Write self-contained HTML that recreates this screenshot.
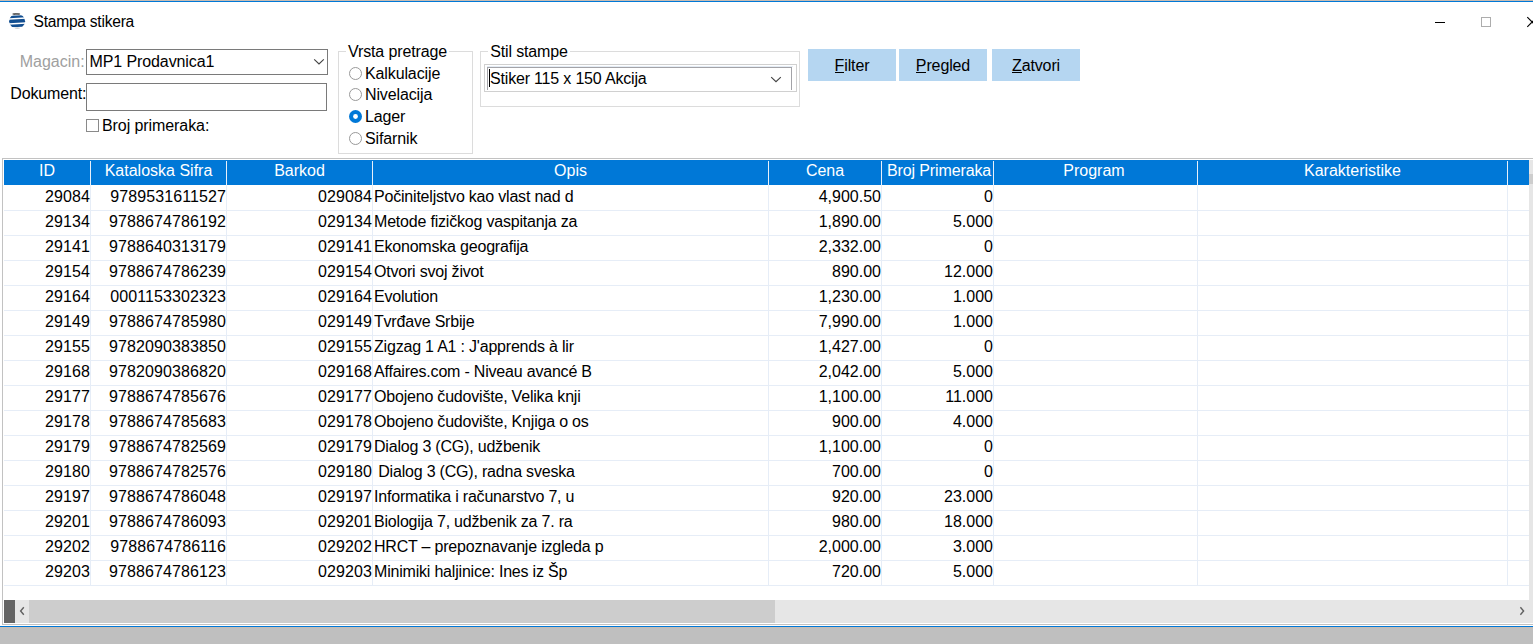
<!DOCTYPE html><html><head><meta charset="utf-8"><style>
*{margin:0;padding:0;box-sizing:border-box}
html,body{width:1533px;height:644px;overflow:hidden;background:#fff;position:relative;font-family:"Liberation Sans",sans-serif;}
.t{position:absolute;white-space:pre;line-height:20px;font-size:16px;}
.r{position:absolute;}
</style></head><body>
<div class="r" style="left:0;top:0;width:1533px;height:1px;background:#c8bcb2"></div>
<div class="r" style="left:0;top:1px;width:1533px;height:1px;background:#0078d7"></div>
<svg class="r" style="left:0;top:0" width="40" height="40" viewBox="0 0 40 40">
<defs><clipPath id="c"><ellipse cx="17.1" cy="21.2" rx="8.0" ry="7.2"/></clipPath></defs>
<ellipse cx="16.3" cy="14.1" rx="3.9" ry="1.0" fill="#5a5a5a"/><ellipse cx="16.6" cy="14.2" rx="2" ry="0.35" fill="#9a9a9a"/>
<g clip-path="url(#c)" fill="#134f91">
<path d="M8 15.9 Q17 15.6 26 14.9 L26 17.3 Q17 17.8 8 18.4Z"/>
<path d="M8 19.9 Q17 19.5 26 18.8 L26 22.2 Q17 22.7 8 23.3Z"/>
<path d="M8 24.8 Q17 24.3 26 23.7 L26 26.5 Q17 27.0 8 27.3Z"/>
</g>
<ellipse cx="17.3" cy="28.1" rx="2.8" ry="0.6" fill="#c4c4c4"/>
</svg>
<div class="t" style="left:33.5px;top:11.7px;color:#000;font-size:15.6px;letter-spacing:-0.25px;">Stampa stikera</div>
<div class="r" style="left:1435px;top:22px;width:10px;height:1px;background:#000"></div>
<div class="r" style="left:1481px;top:17px;width:10px;height:10px;border:1px solid #adadad"></div>
<svg class="r" style="left:1520px;top:10px" width="20" height="24"><path d="M7.3 7.2 L16.9 16.8 M7.3 16.8 L16.9 7.2" stroke="#000" stroke-width="1.1"/></svg>
<div class="t" style="left:0px;top:51.5px;color:#a0a0a0;font-size:16px;width:84.6px;text-align:right;">Magacin:</div>
<div class="r" style="left:86px;top:49px;width:242px;height:26px;border:1px solid #7a7a7a"></div>
<div class="t" style="left:89.5px;top:51.5px;color:#000;font-size:16px;letter-spacing:-0.1px;">MP1 Prodavnica1</div>
<svg class="r" style="left:313px;top:58px" width="12" height="8"><path d="M1.2 1.3 L6 5.9 L10.8 1.3" fill="none" stroke="#444" stroke-width="1.15"/></svg>
<div class="t" style="left:0px;top:83.5px;color:#000;font-size:16px;width:86.3px;text-align:right;letter-spacing:-0.15px;">Dokument:</div>
<div class="r" style="left:86px;top:83px;width:241px;height:28px;border:1px solid #7a7a7a"></div>
<div class="r" style="left:86px;top:119px;width:13px;height:13px;border:1px solid #8a8a8a"></div>
<div class="t" style="left:102px;top:115.5px;color:#000;font-size:16px;letter-spacing:-0.08px;">Broj primeraka:</div>
<div class="r" style="left:338px;top:51px;width:135px;height:103px;border:1px solid #dcdcdc"></div>
<div class="r" style="left:346px;top:44px;width:103px;height:12px;background:#fff"></div>
<div class="t" style="left:348px;top:41.5px;color:#000;font-size:16px;letter-spacing:-0.12px;">Vrsta pretrage</div>
<svg class="r" style="left:348px;top:66.0px" width="15" height="15"><circle cx="7.5" cy="7.5" r="6" fill="#fff" stroke="#999" stroke-width="1"/></svg>
<div class="t" style="left:365px;top:63.599999999999994px;color:#000;font-size:16px;letter-spacing:-0.12px;">Kalkulacije</div>
<svg class="r" style="left:348px;top:86.8px" width="15" height="15"><circle cx="7.5" cy="7.5" r="6" fill="#fff" stroke="#999" stroke-width="1"/></svg>
<div class="t" style="left:365px;top:84.7px;color:#000;font-size:16px;letter-spacing:-0.12px;">Nivelacija</div>
<svg class="r" style="left:348px;top:109.1px" width="15" height="15"><circle cx="7.5" cy="7.5" r="6.5" fill="#0078d7"/><circle cx="7.5" cy="7.5" r="2.4" fill="#fff"/></svg>
<div class="t" style="left:365px;top:106.6px;color:#000;font-size:16px;letter-spacing:-0.12px;">Lager</div>
<svg class="r" style="left:348px;top:130.8px" width="15" height="15"><circle cx="7.5" cy="7.5" r="6" fill="#fff" stroke="#999" stroke-width="1"/></svg>
<div class="t" style="left:365px;top:128.7px;color:#000;font-size:16px;letter-spacing:-0.12px;">Sifarnik</div>
<div class="r" style="left:480px;top:51px;width:320px;height:56px;border:1px solid #dcdcdc"></div>
<div class="r" style="left:488px;top:44px;width:82px;height:12px;background:#fff"></div>
<div class="t" style="left:490.3px;top:41.5px;color:#000;font-size:16px;letter-spacing:-0.15px;">Stil stampe</div>
<div class="r" style="left:484px;top:64px;width:313px;height:28px;border:1px solid #d0d0d0"></div>
<div class="r" style="left:487px;top:67px;width:305px;height:23px;border-left:1px solid #a3a3a8;border-top:1px solid #a3a3a8;border-right:1px solid #a3a3a8"></div>
<div class="r" style="left:487px;top:66px;width:306px;height:1px;background:#e4ecf5"></div>
<div class="r" style="left:489px;top:69px;width:1px;height:18px;background:#000"></div>
<div class="t" style="left:490px;top:68.8px;color:#000;font-size:16px;letter-spacing:-0.18px;">Stiker 115 x 150 Akcija</div>
<svg class="r" style="left:770px;top:76px" width="12" height="8"><path d="M1.2 1.2 L6 5.7 L10.8 1.2" fill="none" stroke="#444" stroke-width="1.15"/></svg>
<div class="r" style="left:808px;top:49px;width:88px;height:32px;background:#b5d6f1"></div>
<div class="t" style="left:808px;top:55.5px;width:88px;text-align:center;letter-spacing:-0.12px"><span style="position:relative">F<span style="position:absolute;left:0;right:0;top:15.5px;height:1px;background:#000"></span></span>ilter</div>
<div class="r" style="left:899px;top:49px;width:88px;height:32px;background:#b5d6f1"></div>
<div class="t" style="left:899px;top:55.5px;width:88px;text-align:center;letter-spacing:-0.12px"><span style="position:relative">P<span style="position:absolute;left:0;right:0;top:15.5px;height:1px;background:#000"></span></span>regled</div>
<div class="r" style="left:992px;top:49px;width:88px;height:32px;background:#b5d6f1"></div>
<div class="t" style="left:992px;top:55.5px;width:88px;text-align:center;letter-spacing:-0.12px"><span style="position:relative">Z<span style="position:absolute;left:0;right:0;top:15.5px;height:1px;background:#000"></span></span>atvori</div>
<div class="r" style="left:2px;top:158px;width:1531px;height:1px;background:#c2c2c2"></div>
<div class="r" style="left:2px;top:158px;width:1px;height:467px;background:#c2c2c2"></div>
<div class="r" style="left:2px;top:624px;width:1531px;height:1px;background:#c2c2c2"></div>
<div class="r" style="left:4px;top:160px;width:1525px;height:25px;background:#0078d7"></div>
<div class="r" style="left:90px;top:161px;width:1px;height:24px;background:#e8f0fa"></div>
<div class="r" style="left:90px;top:185px;width:1px;height:401px;background:#e6edf7"></div>
<div class="r" style="left:226px;top:161px;width:1px;height:24px;background:#e8f0fa"></div>
<div class="r" style="left:226px;top:185px;width:1px;height:401px;background:#e6edf7"></div>
<div class="r" style="left:372px;top:161px;width:1px;height:24px;background:#e8f0fa"></div>
<div class="r" style="left:372px;top:185px;width:1px;height:401px;background:#e6edf7"></div>
<div class="r" style="left:768px;top:161px;width:1px;height:24px;background:#e8f0fa"></div>
<div class="r" style="left:768px;top:185px;width:1px;height:401px;background:#e6edf7"></div>
<div class="r" style="left:881px;top:161px;width:1px;height:24px;background:#e8f0fa"></div>
<div class="r" style="left:881px;top:185px;width:1px;height:401px;background:#e6edf7"></div>
<div class="r" style="left:993px;top:161px;width:1px;height:24px;background:#e8f0fa"></div>
<div class="r" style="left:993px;top:185px;width:1px;height:401px;background:#e6edf7"></div>
<div class="r" style="left:1197px;top:161px;width:1px;height:24px;background:#e8f0fa"></div>
<div class="r" style="left:1197px;top:185px;width:1px;height:401px;background:#e6edf7"></div>
<div class="r" style="left:1507px;top:161px;width:1px;height:24px;background:#e8f0fa"></div>
<div class="r" style="left:1507px;top:185px;width:1px;height:401px;background:#e6edf7"></div>
<div class="r" style="left:4px;top:210px;width:1525px;height:1px;background:#e6edf7"></div>
<div class="r" style="left:4px;top:235px;width:1525px;height:1px;background:#e6edf7"></div>
<div class="r" style="left:4px;top:260px;width:1525px;height:1px;background:#e6edf7"></div>
<div class="r" style="left:4px;top:285px;width:1525px;height:1px;background:#e6edf7"></div>
<div class="r" style="left:4px;top:310px;width:1525px;height:1px;background:#e6edf7"></div>
<div class="r" style="left:4px;top:335px;width:1525px;height:1px;background:#e6edf7"></div>
<div class="r" style="left:4px;top:360px;width:1525px;height:1px;background:#e6edf7"></div>
<div class="r" style="left:4px;top:385px;width:1525px;height:1px;background:#e6edf7"></div>
<div class="r" style="left:4px;top:410px;width:1525px;height:1px;background:#e6edf7"></div>
<div class="r" style="left:4px;top:435px;width:1525px;height:1px;background:#e6edf7"></div>
<div class="r" style="left:4px;top:460px;width:1525px;height:1px;background:#e6edf7"></div>
<div class="r" style="left:4px;top:485px;width:1525px;height:1px;background:#e6edf7"></div>
<div class="r" style="left:4px;top:510px;width:1525px;height:1px;background:#e6edf7"></div>
<div class="r" style="left:4px;top:535px;width:1525px;height:1px;background:#e6edf7"></div>
<div class="r" style="left:4px;top:560px;width:1525px;height:1px;background:#e6edf7"></div>
<div class="r" style="left:4px;top:585px;width:1525px;height:1px;background:#e6edf7"></div>
<div class="t" style="left:4px;top:160.5px;width:86px;text-align:center;color:#fff;">ID</div>
<div class="t" style="left:91px;top:160.5px;width:135px;text-align:center;color:#fff;">Kataloska Sifra</div>
<div class="t" style="left:227px;top:160.5px;width:145px;text-align:center;color:#fff;">Barkod</div>
<div class="t" style="left:373px;top:160.5px;width:395px;text-align:center;color:#fff;">Opis</div>
<div class="t" style="left:769px;top:160.5px;width:112px;text-align:center;color:#fff;">Cena</div>
<div class="t" style="left:883.5px;top:160.5px;width:111px;text-align:center;color:#fff;letter-spacing:-0.12px;">Broj Primeraka</div>
<div class="t" style="left:992.5px;top:160.5px;width:203px;text-align:center;color:#fff;">Program</div>
<div class="t" style="left:1198px;top:160.5px;width:309px;text-align:center;color:#fff;">Karakteristike</div>
<div class="t" style="left:4px;top:186.5px;width:86px;text-align:right;padding-right:0px;letter-spacing:0.1px;">29084</div>
<div class="t" style="left:91px;top:186.5px;width:135px;text-align:right;padding-right:0px;letter-spacing:0.1px;">9789531611527</div>
<div class="t" style="left:227px;top:186.5px;width:145px;text-align:right;padding-right:0px;letter-spacing:0.1px;">029084</div>
<div class="t" style="left:374px;top:186.5px;letter-spacing:-0.2px">Počiniteljstvo kao vlast nad d</div>
<div class="t" style="left:769px;top:186.5px;width:112px;text-align:right;padding-right:0px;">4,900.50</div>
<div class="t" style="left:882px;top:186.5px;width:111px;text-align:right;padding-right:0px;">0</div>
<div class="t" style="left:4px;top:211.5px;width:86px;text-align:right;padding-right:0px;letter-spacing:0.1px;">29134</div>
<div class="t" style="left:91px;top:211.5px;width:135px;text-align:right;padding-right:0px;letter-spacing:0.1px;">9788674786192</div>
<div class="t" style="left:227px;top:211.5px;width:145px;text-align:right;padding-right:0px;letter-spacing:0.1px;">029134</div>
<div class="t" style="left:374px;top:211.5px;letter-spacing:-0.2px">Metode fizičkog vaspitanja za</div>
<div class="t" style="left:769px;top:211.5px;width:112px;text-align:right;padding-right:0px;">1,890.00</div>
<div class="t" style="left:882px;top:211.5px;width:111px;text-align:right;padding-right:0px;">5.000</div>
<div class="t" style="left:4px;top:236.5px;width:86px;text-align:right;padding-right:0px;letter-spacing:0.1px;">29141</div>
<div class="t" style="left:91px;top:236.5px;width:135px;text-align:right;padding-right:0px;letter-spacing:0.1px;">9788640313179</div>
<div class="t" style="left:227px;top:236.5px;width:145px;text-align:right;padding-right:0px;letter-spacing:0.1px;">029141</div>
<div class="t" style="left:374px;top:236.5px;letter-spacing:-0.2px">Ekonomska geografija</div>
<div class="t" style="left:769px;top:236.5px;width:112px;text-align:right;padding-right:0px;">2,332.00</div>
<div class="t" style="left:882px;top:236.5px;width:111px;text-align:right;padding-right:0px;">0</div>
<div class="t" style="left:4px;top:261.5px;width:86px;text-align:right;padding-right:0px;letter-spacing:0.1px;">29154</div>
<div class="t" style="left:91px;top:261.5px;width:135px;text-align:right;padding-right:0px;letter-spacing:0.1px;">9788674786239</div>
<div class="t" style="left:227px;top:261.5px;width:145px;text-align:right;padding-right:0px;letter-spacing:0.1px;">029154</div>
<div class="t" style="left:374px;top:261.5px;letter-spacing:-0.2px">Otvori svoj život</div>
<div class="t" style="left:769px;top:261.5px;width:112px;text-align:right;padding-right:0px;">890.00</div>
<div class="t" style="left:882px;top:261.5px;width:111px;text-align:right;padding-right:0px;">12.000</div>
<div class="t" style="left:4px;top:286.5px;width:86px;text-align:right;padding-right:0px;letter-spacing:0.1px;">29164</div>
<div class="t" style="left:91px;top:286.5px;width:135px;text-align:right;padding-right:0px;letter-spacing:0.1px;">0001153302323</div>
<div class="t" style="left:227px;top:286.5px;width:145px;text-align:right;padding-right:0px;letter-spacing:0.1px;">029164</div>
<div class="t" style="left:374px;top:286.5px;letter-spacing:-0.2px">Evolution</div>
<div class="t" style="left:769px;top:286.5px;width:112px;text-align:right;padding-right:0px;">1,230.00</div>
<div class="t" style="left:882px;top:286.5px;width:111px;text-align:right;padding-right:0px;">1.000</div>
<div class="t" style="left:4px;top:311.5px;width:86px;text-align:right;padding-right:0px;letter-spacing:0.1px;">29149</div>
<div class="t" style="left:91px;top:311.5px;width:135px;text-align:right;padding-right:0px;letter-spacing:0.1px;">9788674785980</div>
<div class="t" style="left:227px;top:311.5px;width:145px;text-align:right;padding-right:0px;letter-spacing:0.1px;">029149</div>
<div class="t" style="left:374px;top:311.5px;letter-spacing:-0.2px">Tvrđave Srbije</div>
<div class="t" style="left:769px;top:311.5px;width:112px;text-align:right;padding-right:0px;">7,990.00</div>
<div class="t" style="left:882px;top:311.5px;width:111px;text-align:right;padding-right:0px;">1.000</div>
<div class="t" style="left:4px;top:336.5px;width:86px;text-align:right;padding-right:0px;letter-spacing:0.1px;">29155</div>
<div class="t" style="left:91px;top:336.5px;width:135px;text-align:right;padding-right:0px;letter-spacing:0.1px;">9782090383850</div>
<div class="t" style="left:227px;top:336.5px;width:145px;text-align:right;padding-right:0px;letter-spacing:0.1px;">029155</div>
<div class="t" style="left:374px;top:336.5px;letter-spacing:-0.2px">Zigzag 1 A1 : J'apprends à lir</div>
<div class="t" style="left:769px;top:336.5px;width:112px;text-align:right;padding-right:0px;">1,427.00</div>
<div class="t" style="left:882px;top:336.5px;width:111px;text-align:right;padding-right:0px;">0</div>
<div class="t" style="left:4px;top:361.5px;width:86px;text-align:right;padding-right:0px;letter-spacing:0.1px;">29168</div>
<div class="t" style="left:91px;top:361.5px;width:135px;text-align:right;padding-right:0px;letter-spacing:0.1px;">9782090386820</div>
<div class="t" style="left:227px;top:361.5px;width:145px;text-align:right;padding-right:0px;letter-spacing:0.1px;">029168</div>
<div class="t" style="left:374px;top:361.5px;letter-spacing:-0.2px">Affaires.com - Niveau avancé B</div>
<div class="t" style="left:769px;top:361.5px;width:112px;text-align:right;padding-right:0px;">2,042.00</div>
<div class="t" style="left:882px;top:361.5px;width:111px;text-align:right;padding-right:0px;">5.000</div>
<div class="t" style="left:4px;top:386.5px;width:86px;text-align:right;padding-right:0px;letter-spacing:0.1px;">29177</div>
<div class="t" style="left:91px;top:386.5px;width:135px;text-align:right;padding-right:0px;letter-spacing:0.1px;">9788674785676</div>
<div class="t" style="left:227px;top:386.5px;width:145px;text-align:right;padding-right:0px;letter-spacing:0.1px;">029177</div>
<div class="t" style="left:374px;top:386.5px;letter-spacing:-0.2px">Obojeno čudovište, Velika knji</div>
<div class="t" style="left:769px;top:386.5px;width:112px;text-align:right;padding-right:0px;">1,100.00</div>
<div class="t" style="left:882px;top:386.5px;width:111px;text-align:right;padding-right:0px;">11.000</div>
<div class="t" style="left:4px;top:411.5px;width:86px;text-align:right;padding-right:0px;letter-spacing:0.1px;">29178</div>
<div class="t" style="left:91px;top:411.5px;width:135px;text-align:right;padding-right:0px;letter-spacing:0.1px;">9788674785683</div>
<div class="t" style="left:227px;top:411.5px;width:145px;text-align:right;padding-right:0px;letter-spacing:0.1px;">029178</div>
<div class="t" style="left:374px;top:411.5px;letter-spacing:-0.2px">Obojeno čudovište, Knjiga o os</div>
<div class="t" style="left:769px;top:411.5px;width:112px;text-align:right;padding-right:0px;">900.00</div>
<div class="t" style="left:882px;top:411.5px;width:111px;text-align:right;padding-right:0px;">4.000</div>
<div class="t" style="left:4px;top:436.5px;width:86px;text-align:right;padding-right:0px;letter-spacing:0.1px;">29179</div>
<div class="t" style="left:91px;top:436.5px;width:135px;text-align:right;padding-right:0px;letter-spacing:0.1px;">9788674782569</div>
<div class="t" style="left:227px;top:436.5px;width:145px;text-align:right;padding-right:0px;letter-spacing:0.1px;">029179</div>
<div class="t" style="left:374px;top:436.5px;letter-spacing:-0.2px">Dialog 3 (CG), udžbenik</div>
<div class="t" style="left:769px;top:436.5px;width:112px;text-align:right;padding-right:0px;">1,100.00</div>
<div class="t" style="left:882px;top:436.5px;width:111px;text-align:right;padding-right:0px;">0</div>
<div class="t" style="left:4px;top:461.5px;width:86px;text-align:right;padding-right:0px;letter-spacing:0.1px;">29180</div>
<div class="t" style="left:91px;top:461.5px;width:135px;text-align:right;padding-right:0px;letter-spacing:0.1px;">9788674782576</div>
<div class="t" style="left:227px;top:461.5px;width:145px;text-align:right;padding-right:0px;letter-spacing:0.1px;">029180</div>
<div class="t" style="left:374px;top:461.5px;letter-spacing:-0.2px"> Dialog 3 (CG), radna sveska</div>
<div class="t" style="left:769px;top:461.5px;width:112px;text-align:right;padding-right:0px;">700.00</div>
<div class="t" style="left:882px;top:461.5px;width:111px;text-align:right;padding-right:0px;">0</div>
<div class="t" style="left:4px;top:486.5px;width:86px;text-align:right;padding-right:0px;letter-spacing:0.1px;">29197</div>
<div class="t" style="left:91px;top:486.5px;width:135px;text-align:right;padding-right:0px;letter-spacing:0.1px;">9788674786048</div>
<div class="t" style="left:227px;top:486.5px;width:145px;text-align:right;padding-right:0px;letter-spacing:0.1px;">029197</div>
<div class="t" style="left:374px;top:486.5px;letter-spacing:-0.2px">Informatika i računarstvo 7, u</div>
<div class="t" style="left:769px;top:486.5px;width:112px;text-align:right;padding-right:0px;">920.00</div>
<div class="t" style="left:882px;top:486.5px;width:111px;text-align:right;padding-right:0px;">23.000</div>
<div class="t" style="left:4px;top:511.5px;width:86px;text-align:right;padding-right:0px;letter-spacing:0.1px;">29201</div>
<div class="t" style="left:91px;top:511.5px;width:135px;text-align:right;padding-right:0px;letter-spacing:0.1px;">9788674786093</div>
<div class="t" style="left:227px;top:511.5px;width:145px;text-align:right;padding-right:0px;letter-spacing:0.1px;">029201</div>
<div class="t" style="left:374px;top:511.5px;letter-spacing:-0.2px">Biologija 7, udžbenik za 7. ra</div>
<div class="t" style="left:769px;top:511.5px;width:112px;text-align:right;padding-right:0px;">980.00</div>
<div class="t" style="left:882px;top:511.5px;width:111px;text-align:right;padding-right:0px;">18.000</div>
<div class="t" style="left:4px;top:536.5px;width:86px;text-align:right;padding-right:0px;letter-spacing:0.1px;">29202</div>
<div class="t" style="left:91px;top:536.5px;width:135px;text-align:right;padding-right:0px;letter-spacing:0.1px;">9788674786116</div>
<div class="t" style="left:227px;top:536.5px;width:145px;text-align:right;padding-right:0px;letter-spacing:0.1px;">029202</div>
<div class="t" style="left:374px;top:536.5px;letter-spacing:-0.2px">HRCT – prepoznavanje izgleda p</div>
<div class="t" style="left:769px;top:536.5px;width:112px;text-align:right;padding-right:0px;">2,000.00</div>
<div class="t" style="left:882px;top:536.5px;width:111px;text-align:right;padding-right:0px;">3.000</div>
<div class="t" style="left:4px;top:561.5px;width:86px;text-align:right;padding-right:0px;letter-spacing:0.1px;">29203</div>
<div class="t" style="left:91px;top:561.5px;width:135px;text-align:right;padding-right:0px;letter-spacing:0.1px;">9788674786123</div>
<div class="t" style="left:227px;top:561.5px;width:145px;text-align:right;padding-right:0px;letter-spacing:0.1px;">029203</div>
<div class="t" style="left:374px;top:561.5px;letter-spacing:-0.2px">Minimiki haljinice: Ines iz Šp</div>
<div class="t" style="left:769px;top:561.5px;width:112px;text-align:right;padding-right:0px;">720.00</div>
<div class="t" style="left:882px;top:561.5px;width:111px;text-align:right;padding-right:0px;">5.000</div>
<div class="r" style="left:1529px;top:160px;width:4px;height:440px;background:#e6e6e6"></div>
<div class="r" style="left:1529px;top:174px;width:4px;height:10px;background:#cdcdcd"></div>
<div class="r" style="left:4px;top:600px;width:1529px;height:23px;background:#e6e6e6"></div>
<div class="r" style="left:4px;top:600px;width:11px;height:23px;background:#646464"></div>
<div class="r" style="left:29px;top:600px;width:746px;height:23px;background:#cdcdcd"></div>
<svg class="r" style="left:18px;top:605px" width="10" height="12"><path d="M5.8 2.3 L2.6 6 L5.8 9.7" fill="none" stroke="#606060" stroke-width="1.4"/></svg>
<svg class="r" style="left:1517px;top:605px" width="10" height="12"><path d="M3.4 2.3 L6.6 6 L3.4 9.7" fill="none" stroke="#606060" stroke-width="1.4"/></svg>
<div class="r" style="left:0;top:626px;width:1533px;height:1px;background:#0078d7"></div>
<div class="r" style="left:0;top:627px;width:1533px;height:1px;background:#c8bcb2"></div>
<div class="r" style="left:0;top:628px;width:1533px;height:16px;background:#bfbfbf"></div>
</body></html>
